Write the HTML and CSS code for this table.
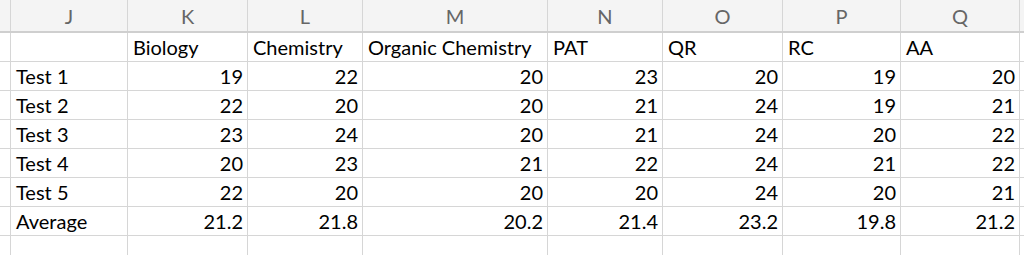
FILE: index.html
```html
<!DOCTYPE html>
<html>
<head>
<meta charset="utf-8">
<link rel="stylesheet" href="styles.css">
</head>
<body>
<table class="sheet">
  <colgroup>
    <col class="c-i"><col class="c-j"><col class="c-k"><col class="c-l"><col class="c-m"><col class="c-n"><col class="c-o"><col class="c-p"><col class="c-q"><col class="c-r">
  </colgroup>
  <thead>
    <tr class="hdr">
      <th></th><th>J</th><th>K</th><th>L</th><th>M</th><th>N</th><th>O</th><th>P</th><th>Q</th><th></th>
    </tr>
  </thead>
  <tbody>
    <tr><td></td><td></td><td>Biology</td><td>Chemistry</td><td>Organic Chemistry</td><td>PAT</td><td>QR</td><td>RC</td><td>AA</td><td></td></tr>
    <tr><td></td><td>Test 1</td><td class="n">19</td><td class="n">22</td><td class="n">20</td><td class="n">23</td><td class="n">20</td><td class="n">19</td><td class="n">20</td><td></td></tr>
    <tr><td></td><td>Test 2</td><td class="n">22</td><td class="n">20</td><td class="n">20</td><td class="n">21</td><td class="n">24</td><td class="n">19</td><td class="n">21</td><td></td></tr>
    <tr><td></td><td>Test 3</td><td class="n">23</td><td class="n">24</td><td class="n">20</td><td class="n">21</td><td class="n">24</td><td class="n">20</td><td class="n">22</td><td></td></tr>
    <tr><td></td><td>Test 4</td><td class="n">20</td><td class="n">23</td><td class="n">21</td><td class="n">22</td><td class="n">24</td><td class="n">21</td><td class="n">22</td><td></td></tr>
    <tr><td></td><td>Test 5</td><td class="n">22</td><td class="n">20</td><td class="n">20</td><td class="n">20</td><td class="n">24</td><td class="n">20</td><td class="n">21</td><td></td></tr>
    <tr><td></td><td>Average</td><td class="n">21.2</td><td class="n">21.8</td><td class="n">20.2</td><td class="n">21.4</td><td class="n">23.2</td><td class="n">19.8</td><td class="n">21.2</td><td></td></tr>
    <tr><td></td><td></td><td></td><td></td><td></td><td></td><td></td><td></td><td></td><td></td></tr>
  </tbody>
</table>
</body>
</html>
```
FILE: styles.css
```css
html, body {
  margin: 0;
  padding: 0;
  background: #ffffff;
  overflow: hidden;
}

.sheet {
  border-collapse: collapse;
  table-layout: fixed;
  width: 1034px;
  margin-left: -1px;
  font-family: Lato, "Liberation Sans", sans-serif;
  font-size: 20px;
  color: #000000;
}

.c-i { width: 11px; }
.c-j { width: 117px; }
.c-k { width: 120px; }
.c-l { width: 115px; }
.c-m { width: 185px; }
.c-n { width: 115px; }
.c-o { width: 120px; }
.c-p { width: 118px; }
.c-q { width: 119px; }
.c-r { width: 14px; }

.sheet th,
.sheet td {
  border: 1px solid #d6d6d6;
  padding: 0 4px 0 5px;
  white-space: nowrap;
  overflow: hidden;
  text-align: left;
}

.hdr th {
  height: 31px;
  background: #f4f4f4;
  border-top: none;
  border-bottom: 2px solid #cfcfcf;
  text-align: center;
  font-weight: 400;
  color: #666666;
  font-size: 20px;
  padding: 0;
}

.sheet td {
  height: 28px;
  line-height: 20px;
}

.sheet td.n {
  text-align: right;
}
```
